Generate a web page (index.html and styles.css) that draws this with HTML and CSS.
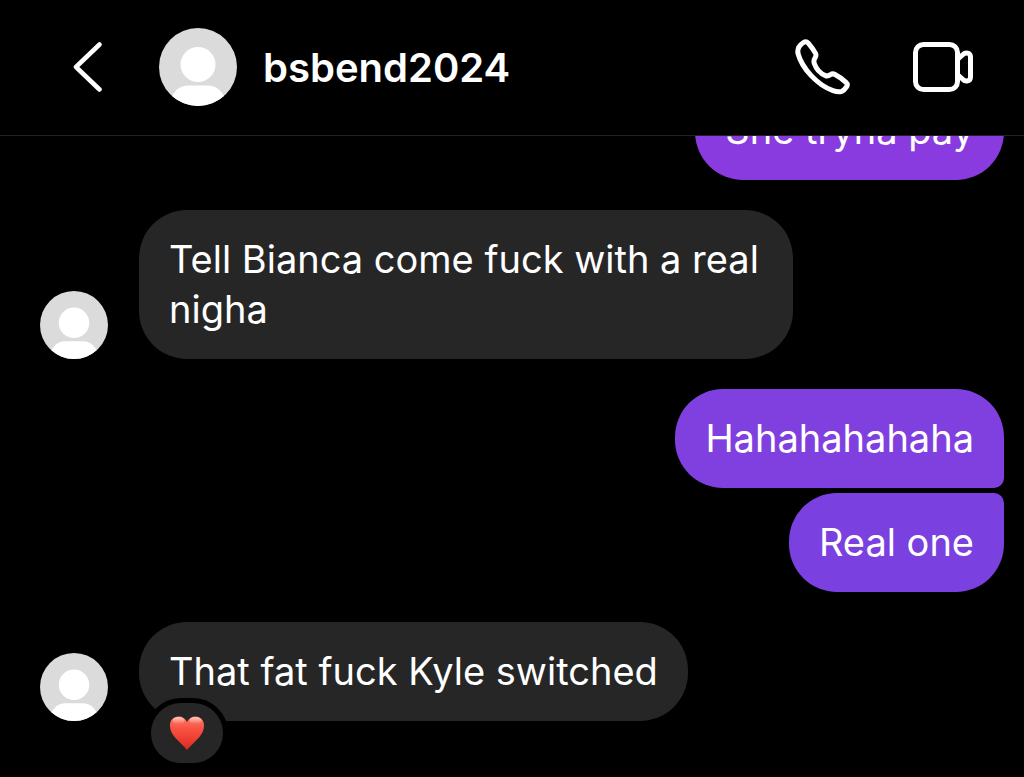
FILE: index.html
```html
<!DOCTYPE html>
<html lang="en">
<head>
<meta charset="UTF-8">
<meta name="viewport" content="width=device-width, initial-scale=1.0">
<title>bsbend2024</title>
<link rel="stylesheet" href="styles.css">
</head>
<body>
    <!-- shared avatar picture -->
    <svg class="defs" aria-hidden="true">
        <symbol id="avatar" viewBox="0 0 78 78">
            <circle cx="39" cy="39" r="39" fill="#dbdbdb"/>
            <circle cx="39" cy="36.500" r="17.500" fill="#fff"/>
            <path d="M13 68C17 61 22 57.500 29 57.500H49C56 57.500 61 61 65 68A39 39 0 0 1 13 68Z" fill="#fff"/>
        </symbol>
    </svg>

    <header class="topbar">
        <button type="button" class="icon-btn back" aria-label="Back">
            <svg width="30" height="50" viewBox="0 0 30 50" fill="none" stroke="#fff" stroke-width="4.500" stroke-linecap="round" stroke-linejoin="round">
                <path d="M26.500 2.500L3 25L26.500 47.500"/>
            </svg>
        </button>
        <svg class="avatar avatar-lg" role="img" aria-label="Profile picture"><use href="#avatar"/></svg>
        <h1 class="username">bsbend2024</h1>
        <button type="button" class="icon-btn" aria-label="Audio call">
            <svg width="56" height="56" viewBox="0 0 56 56" fill="none" stroke="#fff" stroke-width="5" stroke-linejoin="round" stroke-linecap="round">
                <path d="M8.500 3.500C10 2.500 12 2.700 13.300 4.200C16.500 8 19 11.500 20.700 14.700C21.300 16 21 17 20.300 18.300C19 20.500 18.500 22.300 19.200 24.200C21 29.500 25.500 34.500 30.500 36.600C32.500 37.500 34 36.700 35.500 35.700C37 34.600 38.500 34.700 40 35.500C44 37.600 47.500 40.100 51 43.300C52.500 44.700 52.700 46 51.700 47.600C50.200 49.900 48.700 51.500 46.700 52.400C44.500 53.200 41.500 52.900 38 51.700C22.500 46.200 7 29.500 3 14.500C2 9.500 4 6.500 8.500 3.500Z"/>
            </svg>
        </button>
        <button type="button" class="icon-btn video" aria-label="Video call">
            <svg width="60" height="50" viewBox="0 0 60 50" fill="none" stroke="#fff" stroke-width="5" stroke-linejoin="round">
                <rect x="2.500" y="2.500" width="42" height="45" rx="8"/>
                <path d="M45 17L50 12.500C52.500 10 57.500 10.500 57.500 15V35C57.500 39.500 52.500 40 50 37.500L45 33"/>
            </svg>
        </button>
    </header>

    <main class="chat">
        <div class="group sent">
            <p class="bubble tone-1">She tryna pay</p>
        </div>

        <div class="group received">
            <svg class="avatar" role="img" aria-label="bsbend2024"><use href="#avatar"/></svg>
            <p class="bubble">Tell Bianca come fuck with a real nigha</p>
        </div>

        <div class="group sent">
            <p class="bubble tone-2 first">Hahahahahaha</p>
            <p class="bubble tone-3 last">Real one</p>
        </div>

        <div class="group received">
            <svg class="avatar" role="img" aria-label="bsbend2024"><use href="#avatar"/></svg>
            <div class="message">
                <p class="bubble">That fat fuck Kyle switched</p>
                <button type="button" class="reaction" aria-label="1 heart reaction">
                    <svg width="36" height="36" viewBox="0 0 36 36">
                        <defs>
                            <linearGradient id="heart" x1="0" y1="0" x2="0" y2="1">
                                <stop offset="0" stop-color="#ff7a68"/>
                                <stop offset="0.400" stop-color="#f8503f"/>
                                <stop offset="1" stop-color="#dc2a22"/>
                            </linearGradient>
                            <linearGradient id="shine" x1="0" y1="0" x2="0" y2="1">
                                <stop offset="0" stop-color="#fff" stop-opacity="0.600"/>
                                <stop offset="1" stop-color="#fff" stop-opacity="0"/>
                            </linearGradient>
                        </defs>
                        <path d="M18 35C15 31 10 27 6 22.500C3 19 1 15.500 1 10.500C1 5 4.500 1.500 9.500 1.500C13.500 1.500 16.500 3.500 18 7C19.500 3.500 22.500 1.500 26.500 1.500C31.500 1.500 35 5 35 10.500C35 15.500 33 19 30 22.500C26 27 21 31 18 35Z" fill="url(#heart)"/>
                        <ellipse cx="9.500" cy="5.500" rx="6" ry="3.500" fill="url(#shine)"/>
                        <ellipse cx="26.500" cy="5.500" rx="6" ry="3.500" fill="url(#shine)"/>
                    </svg>
                </button>
            </div>
        </div>
    </main>
</body>
</html>
```
FILE: styles.css
```css
* {
    box-sizing: border-box;
}

body {
    margin: 0;
    height: 100vh;
    display: flex;
    flex-direction: column;
    background-color: #000;
    color: #fff;
    font-family: Inter, "Liberation Sans", sans-serif;
    font-size: 38px;
    line-height: 50px;
}

.defs {
    position: absolute;
    width: 0;
    height: 0;
}

/* Top bar */
.topbar {
    display: flex;
    align-items: center;
    flex-shrink: 0;
    height: 136px;
    padding: 0 51px 2px 73px;
    border-bottom: 1px solid #222;
}

.icon-btn {
    display: flex;
    padding: 0;
    border: 0;
    background: none;
    cursor: pointer;
}

.back {
    margin-right: 56px;
}

.video {
    margin-left: 62px;
}

.username {
    flex: 1;
    margin: 0 0 0 26px;
    padding-top: 2px;
    font-size: 40px;
    font-weight: 600;
}

.avatar {
    flex-shrink: 0;
    width: 68px;
    height: 68px;
}

.avatar-lg {
    width: 78px;
    height: 78px;
}

/* Messages, newest kept at the bottom */
.chat {
    flex: 1;
    min-height: 0;
    display: flex;
    flex-direction: column;
    justify-content: flex-end;
    gap: 30px;
    padding: 0 20px 56px 40px;
    overflow: hidden;
}

.group {
    display: flex;
    flex-shrink: 0;
}

.sent {
    flex-direction: column;
    align-items: flex-end;
    gap: 5px;
}

.received {
    align-items: flex-end;
    gap: 31px;
}

.bubble {
    max-width: 654px;
    margin: 0;
    padding: 24px 30px 25px;
    border-radius: 48px;
    background-color: #262626;
}

.tone-1 {
    background-color: #8a3bdf;
}

.tone-2 {
    background-color: #7f40df;
}

.tone-3 {
    background-color: #7a41e0;
}

.first {
    border-bottom-right-radius: 10px;
}

.last {
    border-top-right-radius: 10px;
}

.message {
    position: relative;
}

.reaction {
    position: absolute;
    left: 7px;
    bottom: -47px;
    display: flex;
    align-items: center;
    justify-content: center;
    width: 82px;
    height: 70px;
    padding: 0;
    border: 5px solid #000;
    border-radius: 35px;
    background-color: #262626;
}
```
